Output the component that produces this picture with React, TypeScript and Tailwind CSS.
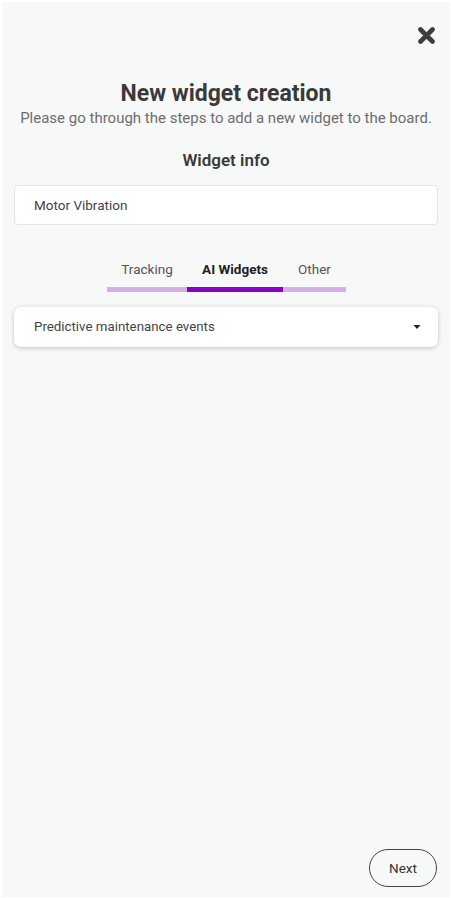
import React from "react";

export default function App() {
  return (
    <div
      className="w-[451px] h-[898px] bg-white pl-[2px] pt-[2px] pr-[1px] pb-[1px]"
      style={{ fontFamily: "Roboto, 'Noto Sans', sans-serif" }}
    >
      <div className="w-full h-full bg-[#f7f8f8] flex flex-col">
        <div className="flex justify-end pt-[25px] pr-[15px]">
          <svg width="17" height="17" viewBox="0 0 17 17">
            <path d="M2.5 2.5 L14.5 14.5 M14.5 2.5 L2.5 14.5" stroke="#3d3d3d" strokeWidth="4.6" strokeLinecap="round" />
          </svg>
        </div>
        <h1 className="mt-[36px] text-center text-[23px] leading-[28px] font-bold text-[#3a3a3a]">
          New widget creation
        </h1>
        <p className="text-center text-[15px] leading-[20px] text-[#6e6e6e]">
          Please go through the steps to add a new widget to the board.
        </p>
        <h2 className="mt-[20px] text-center text-[17px] leading-[24px] font-semibold text-[#3a3a3a]">
          Widget info
        </h2>
        <div className="mx-[12px] mt-[13px] h-[40px] bg-white border border-[#e3e4e4] rounded-[4px] flex items-center pl-[19px] text-[13.5px] text-[#444]">
          Motor Vibration
        </div>
        <div className="mt-[34px] flex justify-center pl-[1px]">
          <div className="flex">
            <div className="w-[80px] flex flex-col items-center">
              <span className="text-[13.5px] leading-[20px] text-[#555] h-[28px]">Tracking</span>
              <div className="w-full h-[5px] bg-[#d7aee9]" />
            </div>
            <div className="w-[96px] flex flex-col items-center">
              <span className="text-[13.5px] leading-[20px] font-bold text-[#222] h-[28px]">AI Widgets</span>
              <div className="w-full h-[5px] bg-[#8a00c5]" />
            </div>
            <div className="w-[63px] flex flex-col items-center">
              <span className="text-[13.5px] leading-[20px] text-[#555] h-[28px]">Other</span>
              <div className="w-full h-[5px] bg-[#d7aee9]" />
            </div>
          </div>
        </div>
        <div className="mx-[12px] mt-[15px] h-[40px] bg-white rounded-[7px] shadow-[0_1px_4px_rgba(0,0,0,0.22)] flex items-center justify-between pl-[20px] pr-[17px] text-[13.3px] text-[#444]">
          <span>Predictive maintenance events</span>
          <svg width="8" height="6" viewBox="0 0 8 6">
            <path d="M0.5 1 L7.5 1 L4 5 Z" fill="#222" />
          </svg>
        </div>
        <div className="flex-1" />
        <div className="flex justify-end pr-[13px] pb-[10px]">
          <button className="w-[68px] h-[38px] rounded-full border border-[#444] text-[13.5px] text-[#333] bg-transparent">
            Next
          </button>
        </div>
      </div>
    </div>
  );
}
